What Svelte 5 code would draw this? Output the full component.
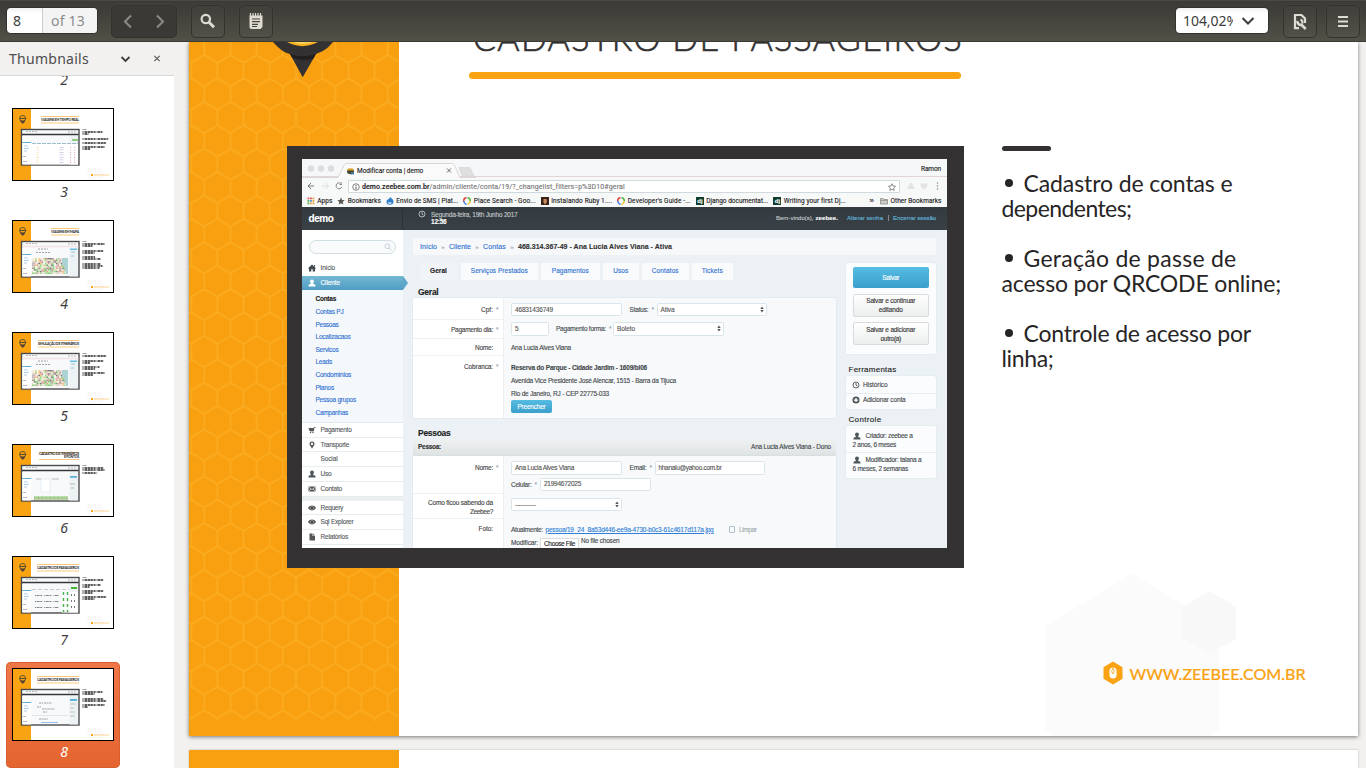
<script>
  // Spreads a run of text to an exact width through its letter spacing.
  function fit(node, width) {
    const apply = () => {
      node.style.letterSpacing = '0px';
      const natural = node.getBoundingClientRect().width;
      const count = [...node.textContent].length;
      node.style.letterSpacing = (width - natural) / count + 'px';
    };
    apply();
    document.fonts.ready.then(apply);
  }

  const thumbs = [
    { n: 2, title: ['VIAGENS'], x: 42, body: 'table', rows: [] },
    { n: 3, title: ['VIAGENS EM TEMPO REAL'], x: 29, body: 'table', rows: [[24, 20], [26, 6], [31, 26], [35, 24], [39, 22], [41, 8]] },
    { n: 4, title: ['VIAGENS EM MAPA'], x: 39, body: 'map', rows: [[24, 22], [26, 10], [31, 21], [33, 12], [37, 13], [39, 18], [44, 18], [46, 20], [48, 17]] },
    { n: 5, title: ['SIMULAÇÃO DE ITINERÁRIOS'], x: 26, body: 'map', rows: [[24, 24], [29, 21], [31, 8], [35, 17], [37, 13], [41, 22], [43, 11]] },
    { n: 6, title: ['CADASTRO DE ITINERÁRIOS', 'E PONTOS'], x: 27, body: 'lowmap', rows: [[24, 21], [26, 22], [29, 15]] },
    { n: 7, title: ['CADASTRO DE PASSAGEIROS'], x: 25, body: 'grid', rows: [[24, 21], [29, 18], [31, 7], [35, 21], [37, 10], [41, 24], [43, 12]] },
    { n: 8, title: ['CADASTRO DE PASSAGEIROS'], x: 25, body: 'form', rows: [[24, 20], [26, 12], [31, 21], [33, 24], [37, 22], [39, 5]] }
  ];

  // Map tiles: streets towards the top, parks towards the bottom left.
  const town = ['#efe8d8', '#d9d3c8', '#e9aaa6', '#f4efdf', '#b9b3c4', '#77757c', '#f0c987', '#ffffff', '#e3dccb', '#c98a92'];
  const park = ['#9bd588', '#8fd27c', '#a9db97', '#efe8d8', '#8ccf79', '#e3a19d', '#b5dfa5', '#77a06c'];
  const cells = [];
  let seed = 11;
  const next = () => (seed = (seed * 1103515245 + 12345) % 2147483648) / 2147483648;
  for (let r = 0; r < 10; r++) for (let c = 0; c < 21; c++) {
    const set = next() < (r / 10) * (c > 14 ? 0.5 : 1) + 0.05 ? park : town;
    cells.push({ x: 20 + c * 1.6, y: 38 + r * 1.6, f: set[Math.floor(next() * set.length)] });
  }

  const bookmarks = [
    ['apps', 'Apps', 15], ['star', 'Bookmarks', 33], ['drop', 'Envio de SMS | Plat...', 62], ['ring', 'Place Search - Goo...', 62],
    ['photo', 'Instalando Ruby 1....', 61], ['ring', "Developer's Guide -...", 63], ['dj', 'Django documentat...', 62], ['dj', 'Writing your first Dj...', 62]
  ];
  const subs = [
    ['Contas PJ', 28], ['Pessoas', 23], ['Localizacaos', 35], ['Servicos', 23], ['Leads', 16.5], ['Condomínios', 35.5],
    ['Planos', 18.5], ['Pessoa grupos', 40.5], ['Campanhas', 32.5]
  ];
  const menu = [['cart', 'Pagamento', 31], ['pin', 'Transporte', 28.5], ['', 'Social', 17], ['user', 'Uso', 11], ['mail', 'Contato', 21.5]];
  const menu2 = [['eye', 'Requery', 22.5], ['eye', 'Sql Explorer', 33], ['file', 'Relatórios', 27.5]];
  const tabs = [['Serviços Prestados', 57, 76.5], ['Pagamentos', 37, 58.5], ['Usos', 15, 35.5], ['Contatos', 27, 46.5], ['Tickets', 21, 40.5]];
</script>

{#snippet t(text, w, cls = '')}<span class="t {cls}" use:fit={w}>{text}</span>{/snippet}

{#snippet icon(name)}
  <svg class="ic" width="8" height="8" viewBox="0 0 16 16">
    {#if name === 'home'}<path d="M0 8.500 8 1l8 7.500-1 1L14 8.700V15h-4.500v-4.500h-3V15H2V8.700L1 9.500zM12 2h2v4l-2-2z" fill="#444b50" />
    {:else if name === 'user' || name === 'userw'}<path d="M8 1c5 0 4.500 6 2 8.200 0 1.800 4 1.300 5 3.300V15H1v-2.500c1-2 5-1.500 5-3.300C3.500 7 3 1 8 1z" fill={name === 'user' ? '#50575b' : '#fff'} />
    {:else if name === 'cart'}<path d="M15 3h-3l-1 7H5" fill="none" stroke="#555" stroke-width="1.600" /><path d="M1 4h11l-1 6H3z" fill="#555" /><circle cx="5" cy="13" r="1.500" fill="#555" /><circle cx="10" cy="13" r="1.500" fill="#555" />
    {:else if name === 'pin'}<path fill-rule="evenodd" d="M8 1a5 5 0 0 1 5 5c0 3-3 5-5 9.500C6 11 3 9 3 6a5 5 0 0 1 5-5zm0 2.700a2.300 2.300 0 1 0 0 4.600 2.300 2.300 0 0 0 0-4.600z" fill="#555" />
    {:else if name === 'mail'}<path d="M1 3h14v10H1z" fill="#555" /><path d="m1 4 7 5 7-5M1 13l5-5M15 13l-5-5" fill="none" stroke="#fff" stroke-width="1.300" />
    {:else if name === 'eye'}<path d="M0 8c4-6.500 12-6.500 16 0-4 6.500-12 6.500-16 0z" fill="#555" /><circle cx="8" cy="8" r="3.600" fill="#bbb" /><circle cx="8" cy="8" r="2.600" fill="#444" />
    {:else if name === 'file'}<path d="M3 1h6v5h5v9H3z" fill="#555" /><path d="M10 1v4h4z" fill="#555" />
    {:else if name === 'clock'}<circle cx="8" cy="8" r="6" fill="none" stroke="currentColor" stroke-width="1.700" /><path d="M8 4v4.500l3 1.500" fill="none" stroke="currentColor" stroke-width="1.700" />
    {:else if name === 'plus'}<circle cx="8" cy="8" r="7" fill="#50575b" /><path d="M8 4v8M4 8h8" stroke="#fff" stroke-width="2.500" />
    {:else if name === 'apps'}
      {#each ['#e2574c', '#e2574c', '#e6a23c', '#4caf50', '#4a90d9', '#e6a23c', '#4caf50', '#e6a23c', '#e6a23c'] as c, i}<rect x={1 + (i % 3) * 5} y={1 + Math.floor(i / 3) * 5} width="3.600" height="3.600" fill={c} />{/each}
    {:else if name === 'star'}<path d="m8 1 2.200 4.800 5.200.6-3.900 3.500 1.100 5.200L8 12.500l-4.600 2.600 1.100-5.200L.6 6.400l5.200-.6z" fill="#555" />
    {:else if name === 'drop'}<path d="M9 0c1 3 6 4 6 9a7 6.500 0 0 1-14 0c0-4 5-4 8-9z" fill="#2f7fc9" /><path d="M4 11c3-2 4 1.500 8 0-1 3.500-7 3.500-8 0z" fill="#fff" />
    {:else if name === 'ring'}<g fill="none" stroke-width="3"><path d="M7 1C3 2 1 5 1.500 8.500" stroke="#e0453c" /><path d="M1.500 8C2 12 4 14 7 15" stroke="#3f7fe0" /><path d="M9 1c4 1 6 4 5.500 7.500" stroke="#5cb848" /><path d="M14.500 8c-.5 4-2.500 6-5.500 7" stroke="#f0bf2c" /></g>
    {:else if name === 'photo'}<rect width="16" height="16" fill="#3a2418" /><path d="M5 4h6l1 6-4 5-3-4z" fill="#c98a5e" />
    {:else if name === 'folder'}<path d="M1 3h5l1.500 2H15v9H1z" fill="#ccc" stroke="#777" stroke-width="1.300" /><path d="M1 7h14" stroke="#777" />
    {/if}
  </svg>
{/snippet}

{#snippet dj()}<span class="dj">dj</span>{/snippet}
{#snippet field(text, w, cls)}<span class="field {cls}">{#if text}{@render t(text, w)}{/if}</span>{/snippet}
{#snippet select(text, w, cls)}
  <span class="field {cls}">{@render t(text, w)}<svg class="ud" width="4" height="7" viewBox="0 0 4 7"><path d="M2 .5 3.700 3H.3zM2 6.500.3 4h3.400z" fill="#555" /></svg></span>
{/snippet}

<div class="app">
  <header class="toolbar">
    <div class="entry"><span class="cur">8</span><span class="total">{@render t('of 13', 34)}</span></div>
    <div class="btn nav">
      <svg width="66" height="33" viewBox="0 0 66 33"><path d="m20 10.500-6 6 6 6M46 10.500l6 6-6 6" fill="none" stroke="#8d8b84" stroke-width="2" /></svg>
    </div>
    <div class="btn">
      <svg width="34" height="33" viewBox="0 0 34 33"><circle cx="14.800" cy="14" r="4.200" fill="none" stroke="#dfdbd2" stroke-width="2.200" /><path d="m18 17.200 5 5" stroke="#dfdbd2" stroke-width="3" /></svg>
    </div>
    <div class="btn">
      <svg width="34" height="33" viewBox="0 0 34 33"><path d="M10.500 10.500h13V22l-2 2h-9a2 2 0 0 1-2-2z" fill="#dfdbd2" /><path d="M11.500 8v3M14 8v3M16.500 8v3M19 8v3M21.500 8v3" stroke="#dfdbd2" stroke-width="1.200" /><path d="M13 14h8M13 16.700h8M13 19.300h6M13 21.500h5" stroke="#45443f" stroke-width="1.200" /></svg>
    </div>
    <div class="zoom">
      <span class="pct">{@render t('104,02%', 55)}</span>
      <svg width="14" height="10" viewBox="0 0 14 10"><path d="m1.500 2 5.500 5.500L12.500 2" fill="none" stroke="#3c3c3c" stroke-width="2" /></svg>
    </div>
    <div class="btn tool">
      <svg width="34" height="33" viewBox="0 0 34 33"><path d="M16 23.200h-4V10h6.500l3.500 3.500V18" fill="none" stroke="#dfdbd2" stroke-width="2.200" /><path d="M14.500 16a3.300 3.300 0 0 0 4 3.800l4.200 4.200" fill="none" stroke="#dfdbd2" stroke-width="2.600" /><path d="M17.500 14.500a3.300 3.300 0 0 1 1.800 4" fill="none" stroke="#dfdbd2" stroke-width="2" /></svg>
    </div>
    <div class="btn">
      <svg width="34" height="33" viewBox="0 0 34 33"><path d="M12 12h10M12 16.500h10M12 21h10" stroke="#dfdbd2" stroke-width="2" /></svg>
    </div>
  </header>

  <div class="main">
    <aside>
      <div class="side-head">
        {@render t('Thumbnails', 80)}
        <svg width="60" height="12" viewBox="0 0 60 12"><path d="m8.500 4 4 4 4-4" fill="none" stroke="#3c3c3c" stroke-width="1.800" /><path d="m41.300 2.800 5.400 5.400m0-5.400-5.400 5.400" stroke="#5c5c5c" stroke-width="1.200" /></svg>
      </div>
      <div class="list">
        {#each thumbs as th}
          <div class="item" class:sel={th.n === 8}>
            <svg width="102" height="73" viewBox="0 0 102 73">
              <rect width="102" height="73" fill="#fff" />
              <rect width="19" height="73" fill="#f9a212" />
              <circle cx="10.700" cy="10.500" r="3" fill="none" stroke="#4f4433" stroke-width=".9" /><path d="M7.500 10.500h6.500M8.500 13h4.500l-2.250 2.500z" fill="#4f4433" stroke="#4f4433" stroke-width=".9" />
              <path d={`M${th.x} 8.500H67M${th.x} ${th.n === 6 ? 15.5 : 15}H67`} stroke="#fbc97a" stroke-width="1" />
              <g font-size="3.400" font-weight="700" fill="#222" text-anchor="end" font-family="Lato, sans-serif">
                {#if th.title.length === 2}<text x="67" y="11.300" textLength={67 - th.x}>{th.title[0]}</text><text x="67" y="14.300" textLength="15">{th.title[1]}</text>
                {:else}<text x="67" y="13.200" textLength={67 - th.x}>{th.title[0]}</text>{/if}
              </g>
              <rect x="9.500" y="21.500" width="57.500" height="35.500" fill="#f7f9fa" stroke="#4a4a4c" stroke-width="1.400" />
              <path d="M14 23.500h11M56 24h9" stroke="#aaa" stroke-width=".8" stroke-dasharray="2 1" />
              <path d="M10 26.500h56.500" stroke={th.body === 'map' ? '#f1e3e8' : '#34383c'} stroke-width="1.400" />
              <rect x="10.300" y="28" width="9" height="28.500" fill="#fff" />
              <path d="M10.300 34.500h9" stroke="#5fa9cc" stroke-width="1" />
              <path d="M12 38h4M12 40.500h5M12 43h3" stroke="#a9cbee" stroke-width=".9" />
              <path d="M11 48.500h3M11 53.500h4" stroke="#aaa" stroke-width=".8" />
              <rect x="57.500" y="28" width="8.500" height="28.500" fill="#edf2f4" />
              {#if th.body === 'map'}
                <path d="M26 29h10M24 32.500h15" stroke="#999" stroke-width=".9" stroke-dasharray="2 1" />
                {#each cells as c}<rect x={c.x} y={c.y} width="1.650" height="1.650" fill={c.f} />{/each}
                <path d="M50 38h6v16h-2l-1-6-3-4z" fill="#acd2d3" />
                <rect x="58" y="28.500" width="7" height="1.500" fill="#6cc0e4" /><path d="M59 32h4M59 36h3" stroke="#8cc4de" stroke-width=".9" />
              {:else if th.body === 'table'}
                <rect x="19.500" y="36" width="46.500" height="20.500" fill="#fff" />
                <path d="M20 35.500h46" stroke="#9dbccb" stroke-dasharray="4 1" /><path d="M60 32h6" stroke="#52b539" stroke-width="1.200" />
                <path d="M25.500 39v16" stroke="#f8e0b5" stroke-width="2" stroke-dasharray="1 1.500" /><path d="M49.500 39v16" stroke="#c4c1e2" stroke-width="4" stroke-dasharray=".8 1.700" /><path d="M58.500 39v16M62.500 39v16" stroke="#e6a8a8" stroke-dasharray="1 1.500" />
              {:else if th.body === 'grid'}
                <path d="M20 33.500h37" stroke="#bbb" stroke-width=".8" stroke-dasharray="4 2" /><rect x="59" y="31" width="6" height="2" fill="#44b62f" /><rect x="50" y="36" width="16" height="20.500" fill="#fff" />
                <path d="M23 39.500h24M23 45.500h24M23 51.500h24" stroke="#85878c" stroke-width="1.100" stroke-dasharray="1 .6 3 .6 2 2" /><path d="M51.500 36v20M55.500 36v20" stroke="#4ab050" stroke-width="1.500" stroke-dasharray="3 3" /><path d="M59.500 38v18M62.500 38v18" stroke="#777" stroke-dasharray="2 4" />
              {:else if th.body === 'lowmap'}
                <path d="M24 35h5M40 35h7" stroke="#aaa" stroke-width=".8" /><path d="M29 35h9v13h-9z" fill="#fff" stroke="#d7e6ee" stroke-width=".6" />
                <path d="M22 54h34" stroke="#a5d792" stroke-width="3.500" /><path d="M22 54.500h34" stroke="#cf9b9b" stroke-width="2" stroke-dasharray="1 3" />
                <rect x="58" y="32" width="7" height="1.800" fill="#5fb2d8" /><path d="M58 40h5M59 44h3" stroke="#aaa" stroke-width=".8" />
              {:else}
                <path d="M27 35h4M25 39h4M32 35h8M30 41h13M31 44h4M27 51h9" stroke="#8a8c90" stroke-width=".8" stroke-dasharray="2 .6" /><path d="M29 54.500h17" stroke="#8fbdec" />
                <rect x="58" y="31" width="7" height="1.800" fill="#4ab0dc" /><path d="M58 36h6M58 40h4M58 44h5M58 48h5" stroke="#b5b8ba" stroke-width=".8" /><rect x="20" y="47" width="36" height="1" fill="#e3e6e8" />
              {/if}
              <path d="M70.500 21.500h4" stroke="#777" stroke-width=".7" />
              {#each th.rows as r}<path d={`M70.500 ${r[0]}h${r[1]}`} stroke="#2b2b2b" stroke-width="1.300" stroke-dasharray="1 1 3 .5 2 .4 2.500 .6 1.500 .4" />{/each}
              <path d="M75 63l4-3.500h10l2 3v9H75z" fill="#fafafa" /><path d="M79 67h2" stroke="#f9a212" stroke-width="2" /><path d="M82 67h15" stroke="#fbcd7c" stroke-width="1" stroke-dasharray="3 .5" />
              <rect x=".5" y=".5" width="101" height="72" fill="none" stroke="#000" />
            </svg>
            <span class="num">{th.n}</span>
          </div>
        {/each}
      </div>
    </aside>

    <section class="doc">
      <article class="slide">
        <svg class="art" width="1169" height="694" viewBox="189 42 1169 694">
          <defs>
            <pattern id="comb" patternUnits="userSpaceOnUse" x="204.300" y="55" width="26.200" height="46.800">
              <path d="M0 0 13.100 7.800 26.200 0M13.100 7.800V23.400L0 31.200V46.800M13.100 23.400 26.200 31.200V46.800" fill="none" stroke="#fbad22" stroke-width="1.500" />
            </pattern>
          </defs>
          <rect x="189" y="42" width="210" height="694" fill="#f9a011" />
          <rect x="189" y="42" width="210" height="679" fill="url(#comb)" />
          <path d="M273 42c8 9 13 11 17 12l12.700 23.300L316 54c8-3 12-6 17-12z" fill="#333132" />
          <path d="M289.500 53.500c8 3.500 18 3.500 26.500 0l-2.500 5c-7 2-15 1.500-21-.5z" fill="#211f20" />
          <path d="M287 42c10 5.500 21 5.500 31 0z" fill="#f9b020" /><path d="M292 42c7 2.500 14 2.500 21 0z" fill="#ffd25a" />
          <path d="m1132 573.700 87 52v104.300l-10 6h-153.500l-10.200-6V626z" fill="#fbfbfb" />
          <path d="m1209.500 591 26.500 15.700v32l-26.500 15-26.700-15v-32z" fill="#f8f8f8" />
        </svg>

        <h1>{@render t('CADASTRO DE PASSAGEIROS', 490)}</h1>
        <div class="rule"></div>

        <div class="cols">
          <div class="frame">
            <div class="shot">
              <div class="tabstrip">
                <svg width="174" height="19" viewBox="302 158.500 174 19"><g fill="#dcdddd"><circle cx="311" cy="168" r="3.200" /><circle cx="321" cy="168" r="3.200" /><circle cx="331" cy="168" r="3.200" /></g><path d="M302 177h36l6.500-13q.5-1 2-1H452q1.500 0 2 1l6 13h16" fill="#fbfafb" stroke="#d5cdcf" stroke-width=".8" /><path d="M459 167h11l4 8h-12z" fill="#dfdfdf" stroke="#ccc" stroke-width=".5" /><path d="m447 168 4 4m0-4-4 4" stroke="#555" stroke-width=".9" /><ellipse cx="350.500" cy="171" rx="3.500" ry="2.700" fill="#3f4a3a" /><path d="M348 168h5l1 2h-7z" fill="#e0a520" /><path d="M351 172h3v2h-3z" fill="#5183b0" /></svg>
                <span class="tabname">{@render t('Modificar conta | demo', 66)}</span>
                <span class="ramon">{@render t('Ramon', 20)}</span>
              </div>
              <div class="addr">
                <svg width="40" height="12" viewBox="0 0 40 12"><path d="M12 6H6.500M9 3 6 6l3 3" fill="none" stroke="#777" stroke-width="1" /><path d="M20 6h6M23.500 3l3 3-3 3" fill="none" stroke="#ddd" stroke-width="1" /><path d="M39.500 4a3 3 0 1 0 .4 3M40 2v2.500h-2.500" fill="none" stroke="#888" stroke-width="1" /></svg>
                <div class="url">
                  <svg width="8" height="8" viewBox="0 0 16 16"><circle cx="8" cy="8" r="6.500" fill="none" stroke="#555" stroke-width="1.500" /><path d="M8 7v5M8 4v1.800" stroke="#555" stroke-width="2" /></svg>
                  <b>{@render t('demo.zeebee.com.br', 67.5)}</b><i>{@render t('/admin/cliente/conta/19/?_changelist_filters=p%3D10#geral', 195)}</i>
                  <svg class="end" width="8" height="8" viewBox="0 0 16 16"><path d="m8 1.500 2 4.500 5 .6-3.700 3.300 1 4.900L8 12.300l-4.300 2.500 1-4.900L1 6.600 6 6z" fill="none" stroke="#555" stroke-width="1.300" /></svg>
                </div>
                <svg width="40" height="12" viewBox="0 0 40 12"><path d="M1 9 4 3h2l3 6zM14.500 3.500h7q0 5-3.500 5.500-3.500-.5-3.500-5.500z" fill="#e3e3e3" /><g fill="#888"><circle cx="31.500" cy="3" r=".8" /><circle cx="31.500" cy="6" r=".8" /><circle cx="31.500" cy="9" r=".8" /></g></svg>
              </div>
              <div class="marks">
                {#each bookmarks as b}<span class="mark">{#if b[0] === 'dj'}{@render dj()}{:else}{@render icon(b[0])}{/if}{@render t(b[1], b[2])}</span>{/each}
                <span class="mark other"><span class="more">»</span>{@render icon('folder')}{@render t('Other Bookmarks', 51)}</span>
              </div>
              <div class="bar">
                <div class="brand">{@render t('demo', 25)}</div>
                <div class="when">{@render icon('clock')}<div class="date">{@render t('Segunda-feira, 19th Junho 2017', 86.5)}<b>{@render t('12:56', 15.5)}</b></div></div>
                <div class="who">{@render t('Bem-vindo(s),', 37.5)}<b>{@render t('zeebee.', 22.5)}</b><em>{@render t('Alterar senha', 36)}</em><s></s><em>{@render t('Encerrar sessão', 43)}</em></div>
              </div>

              <div class="body">
                <nav class="menu">
                  <div class="search"><svg width="8" height="8" viewBox="0 0 8 8"><circle cx="3.300" cy="3.300" r="2.300" fill="none" stroke="#c4d2d8" /><path d="m5 5 2.500 2.500" stroke="#c4d2d8" /></svg></div>
                  <div class="mi first">{@render icon('home')}{@render t('Início', 14.5)}</div>
                  <div class="mi on">{@render icon('userw')}{@render t('Cliente', 19.5)}<svg class="tip" width="5" height="14" viewBox="0 0 5 14"><path d="M0 0 5 7 0 14z" fill="#5da8cb" /></svg></div>
                  <div class="subs"><b>{@render t('Contas', 20.5)}</b>{#each subs as s}<span>{@render t(s[0], s[1])}</span>{/each}</div>
                  {#each menu as m}<div class="mi">{@render icon(m[0])}{@render t(m[1], m[2])}</div>{/each}
                  <div class="band"></div>
                  {#each menu2 as m}<div class="mi">{@render icon(m[0])}{@render t(m[1], m[2])}</div>{/each}
                </nav>

                <div class="content">
                  <div class="crumbs">{@render t('Início', 17)}<i>»</i>{@render t('Cliente', 22)}<i>»</i>{@render t('Contas', 23)}<i>»</i><b>{@render t('468.314.367-49 - Ana Lucia Alves Viana - Ativa', 154)}</b></div>
                  <div class="split">
                    <div class="form">
                      <div class="tabs"><div class="tab cur">{@render t('Geral', 17)}</div>{#each tabs as tb}<div class="tab" style:width="{tb[2]}px">{@render t(tb[0], tb[1])}</div>{/each}</div>
                      <h2>{@render t('Geral', 20.5)}</h2>
                      <div class="panel">
                        <div class="row r1"><div class="lab">{@render t('Cpf:', 12)}<i>*</i></div><div class="val">{@render field('46831436749', 38, 'w110')}<span class="l2">{@render t('Status:', 19)}<i>*</i></span>{@render select('Ativa', 14, 'w110')}</div></div>
                        <div class="row r2"><div class="lab">{@render t('Pagamento dia:', 42)}<i>*</i></div><div class="val">{@render field('5', 4, 'w38')}<span class="l2 near">{@render t('Pagamento forma:', 50)}<i>*</i></span>{@render select('Boleto', 18, 'w110')}</div></div>
                        <div class="row r3"><div class="lab">{@render t('Nome:', 18)}<i></i></div><div class="val">{@render t('Ana Lucia Alves Viana', 60)}</div></div>
                        <div class="row r4"><div class="lab">{@render t('Cobranca:', 29)}<i>*</i></div><div class="val stack"><b>{@render t('Reserva do Parque - Cidade Jardim - 1609/bl06', 136)}</b>{@render t('Avenida Vice Presidente José Alencar, 1515 - Barra da Tijuca', 165)}{@render t('Rio de Janeiro, RJ - CEP 22775-033', 98)}<span class="fill">{@render t('Preencher', 28)}</span></div></div>
                      </div>
                      <h2 class="h2b">{@render t('Pessoas', 32.5)}</h2>
                      <div class="strip"><b>{@render t('Pessoa:', 23)}</b>{@render t('Ana Lucia Alves Viana - Dono', 80)}</div>
                      <div class="panel low">
                        <div class="row p1"><div class="lab">{@render t('Nome:', 18)}<i>*</i></div><div class="val stack"><div class="ln">{@render field('Ana Lucia Alves Viana', 59, 'w110')}<span class="l2">{@render t('Email:', 17)}<i>*</i></span>{@render field('hhanalu@yahoo.com.br', 63, 'w110')}</div><div class="ln"><span class="l3">{@render t('Celular:', 20.5)}<i>*</i></span>{@render field('21994672025', 37, 'w110')}</div></div></div>
                        <div class="row p2"><div class="lab two"><div>{@render t('Como ficou sabendo da', 65)}</div><div>{@render t('Zeebee?', 23)}</div></div><div class="val">{@render select('-----------', 21, 'w110')}</div></div>
                        <div class="row p3"><div class="lab">{@render t('Foto:', 14.5)}<i></i></div><div class="val stack"><div class="ln">{@render t('Atualmente:', 32)}<u>{@render t('pessoa/19_24_8a53d446-ee9a-4730-b0c3-61c4617d117a.jpg', 168)}</u><span class="cb"></span><span class="dim">{@render t('Limpar', 17.5)}</span></div><div class="ln">{@render t('Modificar:', 27)}<span class="choose">{@render t('Choose File', 31)}</span><span class="nofile">{@render t('No file chosen', 38.5)}</span></div></div></div>
                      </div>
                    </div>

                    <div class="tools">
                      <div class="card acts"><div class="save">{@render t('Salvar', 17)}</div><div class="act">{@render t('Salvar e continuar', 49)}{@render t('editando', 24)}</div><div class="act">{@render t('Salvar e adicionar', 49)}{@render t('outro(a)', 20.5)}</div></div>
                      <h3>{@render t('Ferramentas', 48)}</h3>
                      <div class="card"><div class="tl">{@render icon('clock')}{@render t('Histórico', 24.5)}</div><div class="tl">{@render icon('plus')}{@render t('Adicionar conta', 42.5)}</div></div>
                      <h3 class="h3b">{@render t('Controle', 33)}</h3>
                      <div class="card"><div class="hist"><div>{@render icon('user')}{@render t('Criador: zeebee a', 47)}</div>{@render t('2 anos, 6 meses', 43.5)}</div><div class="hist"><div>{@render icon('user')}{@render t('Modificador: taiana a', 56)}</div>{@render t('6 meses, 2 semanas', 55.5)}</div></div>
                    </div>
                  </div>
                </div>
              </div>
            </div>
          </div>

          <div class="points">
            <div class="dash"></div>
            <p><span class="dot"></span>{@render t('Cadastro de contas e', 209)}<br />{@render t('dependentes;', 130)}</p>
            <p><span class="dot"></span>{@render t('Geração de passe de', 213)}<br />{@render t('acesso por QRCODE online;', 279.5)}</p>
            <p><span class="dot"></span>{@render t('Controle de acesso por', 227.5)}<br />{@render t('linha;', 52)}</p>
          </div>
        </div>

        <footer>
          <svg width="20" height="24" viewBox="0 0 20 24"><path d="m10 .5 9.500 5.700v11.500L10 23.500.5 17.700V6.200z" fill="#f9a212" /><rect x="6.500" y="6.500" width="7" height="11" rx="3.500" fill="#fff" /><path d="M10 6.500v2M10 12v1" stroke="#f9a212" stroke-width="1" /><rect x="8.800" y="8.200" width="2.400" height="4" rx="1.200" fill="none" stroke="#f9a212" stroke-width=".8" /></svg>
          {@render t('WWW.ZEEBEE.COM.BR', 176)}
        </footer>
      </article>
      <article class="next"><div></div></article>
    </section>
  </div>
</div>

<style>
  :global(body) { margin: 0; background: #f2f1f0; }
  .app { width: 1366px; height: 768px; overflow: hidden; display: flex; flex-direction: column; font-family: "Noto Sans", sans-serif; font-size: 14px; color: #3c3c3c; }
  .app * { box-sizing: border-box; }
  .t { display: inline-block; white-space: pre; flex: none; }
  svg { display: block; flex: none; }

  .toolbar { position: relative; height: 42px; flex: none; display: flex; align-items: flex-start; padding: 4px 6px 0 7px; background: linear-gradient(#3c3b37, #403f3a 30%, #525148); border-top: 1px solid #4a4943; border-bottom: 1px solid #3a3934; z-index: 1; }
  .entry, .zoom { height: 25px; margin-top: 3px; border-radius: 4px; background: linear-gradient(#f1f1f1, #fff 20%); box-shadow: 0 0 0 1px #33322e; display: flex; align-items: center; overflow: hidden; }
  .entry { width: 90px; }
  .cur { width: 36px; padding-left: 6px; border-right: 1px solid #ccc; line-height: 25px; }
  .total { flex: 1; padding-left: 8px; background: #f4f4f4; color: #8c8c8c; line-height: 25px; }
  .zoom { width: 92px; margin-left: auto; gap: 8px; padding-left: 7px; }
  .pct { width: 50px; overflow: hidden; line-height: 25px; }
  .btn { width: 34px; height: 33px; margin-left: 14px; border: 1px solid #33322e; border-radius: 5px; box-shadow: 0 0 0 1px #55544c30; background: #ffffff05; }
  .btn svg { margin: -1px; }
  .btn:last-child { margin-left: 9px; }
  .tool { margin-left: 15px; }
  .nav { width: 66px; background: #3a3935; }

  .main { flex: 1; min-height: 0; display: flex; }
  aside { width: 174px; flex: none; display: flex; flex-direction: column; }
  .side-head { height: 34px; flex: none; padding-left: 9px; display: flex; align-items: center; gap: 24px; border-bottom: 1px solid #d9d8d6; color: #4c4c4c; }
  .list { flex: 1; min-height: 0; overflow: hidden; background: #fff; display: flex; flex-direction: column; gap: 6px; padding-left: 6px; }
  .item { width: 114px; height: 106px; flex: none; padding: 6px 6px 0; }
  .item:first-child { margin-top: -86px; }
  .num { display: block; height: 22px; line-height: 21px; text-align: center; font-style: italic; padding-left: 2px; }
  .sel { background: linear-gradient(#f07746, #e4642f); border-radius: 5px; box-shadow: inset 0 0 0 1px #d85f30; }
  .sel .num { color: #fff; }

  .doc { flex: 1; padding-left: 15px; overflow: hidden; display: flex; flex-direction: column; gap: 14px; }
  .slide { position: relative; width: 1169px; height: 694px; flex: none; background: #fff; overflow: hidden; box-shadow: 0 1px 4px #777; font-family: Lato, sans-serif; color: #272425; display: flex; flex-direction: column; }
  .next { width: 1169px; height: 30px; flex: none; background: #fff; box-shadow: 0 0 2px #bbb; }
  .next div { width: 210px; height: 30px; background: #f9a010; }
  .art { position: absolute; inset: 0; }
  .slide > :not(.art) { position: relative; }

  h1 { margin: -29px 0 0 284px; height: 58.5px; flex: none; font-size: 34px; font-weight: 300; line-height: 50px; color: #333132; -webkit-text-stroke: .6px #333132; }
  .rule { width: 492.5px; height: 7.5px; flex: none; margin-left: 279.5px; border-radius: 4px; background: #f9a212; }
  .cols { display: flex; margin: 67px 0 0 98px; flex: none; height: 422px; gap: 37.5px; }
  .frame { width: 677px; height: 422px; flex: none; background: #333132; padding: 12.5px 17.5px 20px 15px; }
  .points { font-size: 23px; line-height: 25px; }
  .dash { width: 49px; height: 5px; border-radius: 3px; background: #333132; margin-bottom: 20.3px; }
  .points p { margin: 0 0 25px; height: 50px; white-space: nowrap; }
  .points p .t { vertical-align: top; }
  .dot { display: inline-block; width: 8px; height: 8px; border-radius: 50%; background: #272425; margin: 8px 10.5px 0 3.5px; vertical-align: top; }
  footer { display: flex; align-items: center; gap: 7px; margin: 93px 0 0 913.5px; height: 24px; font-size: 16px; font-weight: 500; color: #f9a212; -webkit-text-stroke: .2px #f9a212; }

  .shot { width: 644.5px; height: 389.5px; overflow: hidden; background: #ebf1f4; font: 6.5px/10px "Liberation Sans", sans-serif; color: #43484b; display: flex; flex-direction: column; -webkit-text-stroke: .12px currentColor; }
  .shot i { font-style: normal; }
  .tabstrip { height: 18.5px; flex: none; display: flex; background: #f6f7f8; position: relative; border-bottom: 1px solid #e3d5d7; color: #222; font-family: Roboto, sans-serif; }
  .tabname { position: absolute; left: 55px; top: 7px; }
  .ramon { margin: 5px 5.5px 0 auto; }
  .addr { height: 17px; flex: none; display: flex; align-items: center; gap: 6px; background: #f7f8f8; }
  .addr > svg { margin-top: 1px; }
  .url { width: 551.5px; height: 13px; margin-top: 2px; background: #fff; border: 1px solid #d0d9dd; border-radius: 1px; display: flex; align-items: center; padding-left: 3px; font-family: Roboto, sans-serif; font-size: 7px; color: #777; }
  .url b { font-weight: 500; color: #222; margin-left: 2px; }
  .url .end { margin: 0 3px 0 auto; }
  .marks { height: 13px; flex: none; display: flex; align-items: center; gap: 5.2px; padding: 0 5px; background: #f7f8f8; font-family: Roboto, sans-serif; color: #222; }
  .mark { display: flex; align-items: center; gap: 2.3px; }
  .other { margin-left: auto; }
  .more { margin-right: 4px; font: 8px/8px "Liberation Sans", sans-serif; }
  .dj { width: 8px; height: 8px; background: #123c2c; color: #fff; font: 700 6px/8px "Liberation Sans", sans-serif; text-align: center; }

  .bar { height: 23px; flex: none; display: flex; background: linear-gradient(#343b40, #394146); color: #c4c9cb; }
  .brand { width: 101px; border-right: 1px solid #2b3135; padding: 1px 0 0 6.5px; font-size: 10px; font-weight: 700; line-height: 22px; color: #fff; }
  .when { display: flex; padding: 3px 0 0 15px; gap: 5px; }
  .date { display: flex; flex-direction: column; line-height: 7.5px; margin-top: .7px; }
  .date b { color: #fff; line-height: 7px; }
  .who { margin-left: auto; padding-right: 10.5px; display: flex; align-items: center; height: 21px; gap: 2px; font-size: 6px; }
  .who b { color: #fff; }
  .who em { font-style: normal; color: #62b5de; margin-left: 7px; }
  .who em:last-child { margin-left: 2px; }
  .who s { width: 1px; height: 6px; background: #888; margin-left: 3px; }

  .body { flex: 1; min-height: 0; display: flex; }
  .menu { width: 101px; flex: none; background: #fff; display: flex; flex-direction: column; color: #565b5e; }
  .search { width: 87px; height: 14px; flex: none; margin: 9.5px 0 6px 7px; border: 1px solid #cfdfe4; border-radius: 7px; background: #f8fafb; display: flex; justify-content: flex-end; align-items: center; padding-right: 3px; }
  .mi { height: 14.75px; flex: none; display: flex; align-items: center; gap: 5px; padding-left: 5.5px; border-bottom: 1px solid #e6edef; }
  .first { border: 0; height: 16.2px; }
  .on { position: relative; height: 14px; border: 0; color: #fff; background: linear-gradient(#74b9d4, #4f9cc3); }
  .tip { position: absolute; left: 101px; top: 0; }
  .subs { height: 133.3px; flex: none; background: #f5f8fa; padding: 3.7px 0 0 13.5px; display: flex; flex-direction: column; border-bottom: 1px solid #e3ebee; color: #2f70d2; line-height: 12.6px; }
  .subs > * { height: 12.6px; }
  .subs b { color: #222; }
  .band { height: 4px; flex: none; background: #eceff0; }

  .content { flex: 1; padding: 8px 10.5px 0 10px; display: flex; flex-direction: column; }
  .crumbs { height: 17px; flex: none; display: flex; align-items: center; background: #f6f8fa; padding-left: 7px; color: #2f70d2; font-size: 7px; }
  .crumbs i { width: 12px; text-align: center; color: #9ab; font-size: 6px; }
  .crumbs b { color: #333; }
  .split { display: flex; justify-content: space-between; margin-top: 8px; }
  .form { width: 422.5px; }
  .tabs { display: flex; gap: 3.5px; padding-left: 6.5px; }
  .tab { height: 16.5px; display: flex; justify-content: center; align-items: center; background: #f8fafb; color: #2f70d2; }
  .tab.cur { width: 38px; background: #f0f4f6; color: #222; font-weight: 700; border: 0; line-height: 10px; padding: 0; }
  h2 { margin: 0 0 0 5px; height: 18.5px; line-height: 25px; font-size: 8.5px; color: #222; }
  .h2b { margin-top: 3px; height: 18px; }
  .panel { background: linear-gradient(90deg, #fff 90.5px, #f7f9fb 90.5px); height: 120px; box-shadow: 0 0 1px #b9cdd6; }
  .low { height: 100px; }
  .row { display: flex; }
  .lab { width: 90.5px; flex: none; display: flex; justify-content: flex-end; border-right: 1px solid #ecf0f2; border-bottom: 1px solid #eef1f3; color: #444; }
  .lab i { width: 9.5px; padding-left: 3px; color: #9ab; }
  .val { flex: 1; display: flex; align-items: center; padding-left: 7.5px; }
  .r1 { height: 22px; } .r1 .lab { padding-top: 7px; } .r1 .val { padding-top: 1px; }
  .r2 { height: 19px; } .r2 .lab { padding-top: 4.5px; } .r2 .val { padding-bottom: 1.5px; }
  .r3 { height: 16.5px; } .r3 .lab { padding-top: 4px; } .r3 .val { padding-top: 1px; }
  .r4 { height: 62.5px; } .r4 .lab { padding-top: 6px; border-bottom: 0; }
  .stack { flex-direction: column; align-items: flex-start; line-height: 13px; }
  .r4 .stack { padding-top: 5px; }
  .r4 .stack > * { line-height: 13px; }
  .r4 b { height: 13px; }
  .fill { width: 41px; height: 13.5px; text-align: center; border-radius: 2px; background: linear-gradient(#55bce2, #3b9fcb); color: #fff; }
  .field { width: 110.5px; height: 13.5px; flex: none; background: #fff; border: 1px solid #d8e6ec; border-radius: 1.5px; display: flex; align-items: center; justify-content: space-between; padding: 0 2px 0 3px; color: #555; line-height: 10px; }
  .w38 { width: 38px; }
  .l2, .l3 { display: flex; gap: 3px; line-height: 13.5px; }
  .l2 { padding: 0 2.5px 0 8px; }
  .near { padding: 0 1.5px 0 7px; }
  .l3 { padding-right: 3px; }
  .l2 i, .l3 i { color: #9ab; width: 2.5px; }
  .ud { flex: none; }
  .strip { height: 16.5px; display: flex; justify-content: space-between; align-items: center; padding: 0 4.5px 0 5px; background: linear-gradient(#f0f2f2, #dee2e3); }
  .strip b { color: #333; }
  .ln { display: flex; align-items: center; height: 13.5px; }
  .p1 { height: 38.5px; } .p1 .lab { padding-top: 7.5px; } .p1 .stack { gap: 3px; padding-top: 5.5px; }
  .p2 { height: 25px; } .p2 .lab { padding: 5px 9.5px 0 0; flex-direction: column; align-items: flex-end; justify-content: flex-start; line-height: 8.7px; } .p2 .val { padding-bottom: 4px; }
  .p3 { height: 36px; } .p3 .lab { padding-top: 5px; } .p3 .stack { padding-top: 3.5px; justify-content: flex-start; }
  u { color: #2f7fd6; text-decoration: none; margin-left: 2.5px; }
  u .t { text-decoration: underline; line-height: 9px; }
  .cb { width: 6.5px; height: 6.5px; border: 1px solid #aebfc8; border-radius: 1px; margin: 0 4px 0 15px; }
  .dim { color: #a3a9ac; }
  .choose { width: 39px; height: 11px; margin: 2px 2px 0; background: #fff; border: 1px solid #ddd; line-height: 10px; text-align: center; color: #222; }
  .nofile { margin-top: -4px; }

  .tools { width: 90.5px; }
  .card { background: #fbfcfd; border-radius: 1.5px; box-shadow: 0 0 1px #b9cdd6; }
  .acts { height: 91px; padding: 4px 7.5px; display: flex; flex-direction: column; gap: 5.5px; text-align: center; }
  .save { height: 21px; line-height: 21px; border-radius: 2px; color: #fff; background: linear-gradient(#55bce2, #3b9fcb); }
  .act { height: 23px; display: flex; flex-direction: column; align-items: center; line-height: 9px; padding-top: 1.5px; border: 1px solid #d9dcdd; border-radius: 2px; background: linear-gradient(#fff, #eceeee); color: #333; }
  h3 { margin: 0 0 0 3px; height: 22px; line-height: 31px; font-size: 8px; font-weight: 400; color: #222; }
  .h3b { height: 17px; line-height: 21px; }
  .tl { height: 16.5px; display: flex; align-items: center; gap: 3px; padding: 2px 0 0 6.5px; }
  .tl + .tl { padding: 0 0 3px 6.5px; }
  .tl + .tl, .hist + .hist { border-top: 1px solid #e8edef; }
  .hist { height: 26px; padding: 5px 0 0 7px; line-height: 9px; }
  .hist + .hist { padding-top: 2px; }
  .hist div { display: flex; gap: 5px; height: 9px; align-items: center; }
</style>
